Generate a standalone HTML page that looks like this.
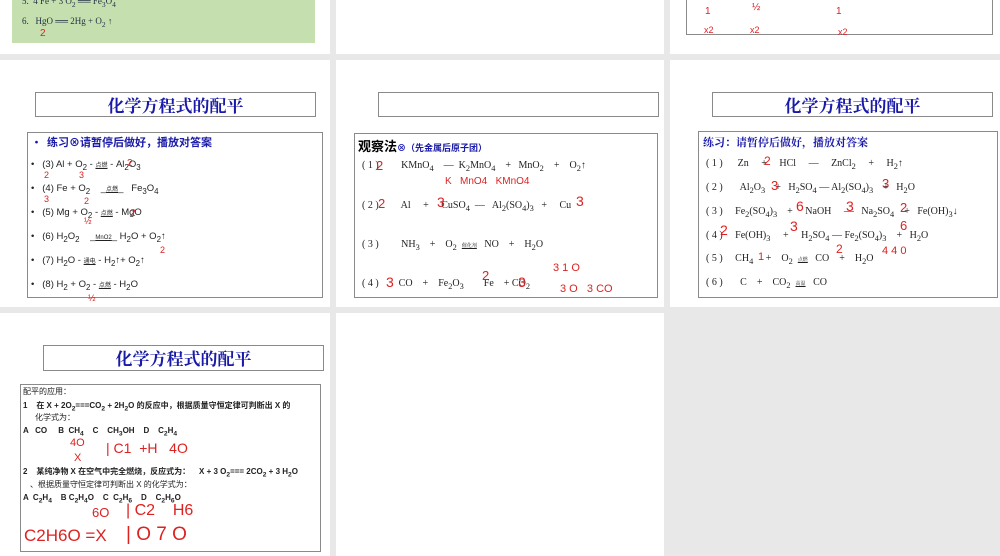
<!DOCTYPE html>
<html><head><meta charset="utf-8"><style>
*{margin:0;padding:0;box-sizing:border-box}
body{width:1000px;height:556px;background:#e8e8e8;position:relative;overflow:hidden;font-family:"Liberation Serif","Noto Serif CJK SC",serif;}
.s{position:absolute;background:#fff}
.a{position:absolute;white-space:nowrap}
.box{position:absolute;border:1px solid #8a8a8a;background:#fff}
.t{color:#1a1aa8;font-family:"Noto Serif CJK SC","Noto Sans CJK SC",serif;font-weight:bold;font-size:17px;text-align:center;line-height:24px}
.r{color:#d22;font-family:"Liberation Sans",sans-serif;position:absolute;white-space:nowrap}
.sm{font-size:9.5px;color:#222;font-family:"Liberation Sans","Noto Sans CJK SC",sans-serif}
.eq{font-size:10px;color:#222}
.b{color:#1a1aa8;font-weight:bold;font-family:"Noto Sans CJK SC",sans-serif}
</style></head><body>
<!-- row1 -->
<div class="s" style="left:0;top:0;width:330px;height:54px"></div>
<div class="a" style="left:12px;top:0;width:303px;height:43px;background:#c6dfae"></div>
<div class="a" style="left:22px;top:-4px;font-size:9px;color:#234">5.&nbsp; 4 Fe + 3 O<sub>2</sub> ══ Fe<sub>3</sub>O<sub>4</sub></div>
<div class="a" style="left:22px;top:16px;font-size:9px;color:#234">6.&nbsp;&nbsp; HgO ══ 2Hg + O<sub>2</sub> ↑</div>
<div class="r" style="left:40px;top:28px;font-size:10px">2</div>
<div class="s" style="left:336px;top:0;width:328px;height:54px"></div>
<div class="s" style="left:670px;top:0;width:330px;height:54px"></div>
<div class="box" style="left:686px;top:-2px;width:307px;height:37px"></div>
<div class="r" style="left:705px;top:6px;font-size:10px">1</div>
<div class="r" style="left:752px;top:2px;font-size:10px">½</div>
<div class="r" style="left:836px;top:6px;font-size:10px">1</div>
<div class="r" style="left:704px;top:25px;font-size:9px">x2</div>
<div class="r" style="left:750px;top:25px;font-size:9px">x2</div>
<div class="r" style="left:838px;top:27px;font-size:9px">x2</div>
<!-- row2 -->
<div class="s" style="left:0;top:60px;width:330px;height:247px"></div>
<div class="s" style="left:336px;top:60px;width:328px;height:247px"></div>
<div class="s" style="left:670px;top:60px;width:330px;height:247px"></div>
<div class="box t" style="left:35px;top:92px;width:281px;height:25px">化学方程式的配平</div>
<div class="box" style="left:378px;top:92px;width:281px;height:25px"></div>
<div class="box t" style="left:712px;top:92px;width:281px;height:25px">化学方程式的配平</div>

<div class="box" style="left:27px;top:132px;width:296px;height:166px"></div>
<div class="a b" style="left:31px;top:134px;font-size:11px">•&nbsp; 练习⊗请暂停后做好，播放对答案</div>
<div class="a sm" style="left:31px;top:159px">•&nbsp;&nbsp; (3) Al + O<sub>2</sub> - <u style="font-size:6px">点燃</u> - Al<sub>2</sub>O<sub>3</sub></div>
<div class="a sm" style="left:31px;top:183px">•&nbsp;&nbsp; (4) Fe + O<sub>2</sub> &nbsp;&nbsp; _<u style="font-size:6px">点燃</u>_ &nbsp; Fe<sub>3</sub>O<sub>4</sub></div>
<div class="a sm" style="left:31px;top:207px">•&nbsp;&nbsp; (5) Mg + O<sub>2</sub> - <u style="font-size:6px">点燃</u> - MgO</div>
<div class="a sm" style="left:31px;top:231px">•&nbsp;&nbsp; (6) H<sub>2</sub>O<sub>2</sub> &nbsp;&nbsp; _<u style="font-size:6px">MnO2</u>_ H<sub>2</sub>O + O<sub>2</sub>↑</div>
<div class="a sm" style="left:31px;top:255px">•&nbsp;&nbsp; (7) H<sub>2</sub>O - <u style="font-size:6px">通电</u> - H<sub>2</sub>↑+ O<sub>2</sub>↑</div>
<div class="a sm" style="left:31px;top:279px">•&nbsp;&nbsp; (8) H<sub>2</sub> + O<sub>2</sub> - <u style="font-size:6px">点燃</u> - H<sub>2</sub>O</div>
<div class="r" style="left:44px;top:170px;font-size:9px">2</div><div class="r" style="left:79px;top:170px;font-size:9px">3</div><div class="r" style="left:127px;top:158px;font-size:10px">2</div>
<div class="r" style="left:44px;top:194px;font-size:9px">3</div><div class="r" style="left:84px;top:196px;font-size:9px">2</div>
<div class="r" style="left:84px;top:216px;font-size:9px">½</div><div class="r" style="left:130px;top:208px;font-size:10px">2</div>
<div class="r" style="left:160px;top:245px;font-size:9px">2</div><div class="r" style="left:88px;top:293px;font-size:9px">½</div>

<div class="box" style="left:354px;top:133px;width:304px;height:165px"></div>
<div class="a" style="left:358px;top:136px;font-size:13px;font-weight:bold;font-family:'Noto Sans CJK SC',sans-serif">观察法<span class="b" style="font-size:9px">⊗（先金属后原子团）</span></div>
<div class="a eq" style="left:362px;top:160px">( 1 ) &nbsp;&nbsp;&nbsp;&nbsp;&nbsp;&nbsp;&nbsp; KMnO<sub>4</sub> &nbsp;&nbsp; — &nbsp;K<sub>2</sub>MnO<sub>4</sub> &nbsp;&nbsp; + &nbsp; MnO<sub>2</sub> &nbsp;&nbsp; + &nbsp;&nbsp; O<sub>2</sub>↑</div>
<div class="a eq" style="left:362px;top:200px">( 2 ) &nbsp;&nbsp;&nbsp;&nbsp;&nbsp;&nbsp;&nbsp; Al &nbsp;&nbsp;&nbsp; + &nbsp;&nbsp;&nbsp; CuSO<sub>4</sub> &nbsp;— &nbsp; Al<sub>2</sub>(SO<sub>4</sub>)<sub>3</sub> &nbsp;&nbsp;+ &nbsp;&nbsp;&nbsp; Cu</div>
<div class="a eq" style="left:362px;top:239px">( 3 ) &nbsp;&nbsp;&nbsp;&nbsp;&nbsp;&nbsp;&nbsp; NH<sub>3</sub> &nbsp;&nbsp; + &nbsp;&nbsp; O<sub>2</sub> &nbsp;<u style="font-size:5px">催化剂</u>&nbsp;&nbsp; NO &nbsp;&nbsp; + &nbsp;&nbsp; H<sub>2</sub>O</div>
<div class="a eq" style="left:362px;top:278px">( 4 ) &nbsp;&nbsp;&nbsp;&nbsp;&nbsp;&nbsp; CO &nbsp;&nbsp; + &nbsp;&nbsp; Fe<sub>2</sub>O<sub>3</sub> &nbsp;&nbsp;&nbsp;&nbsp;&nbsp;&nbsp; Fe &nbsp;&nbsp; + CO<sub>2</sub></div>
<div class="r" style="left:376px;top:158px;font-size:13px">2</div>
<div class="r" style="left:445px;top:176px;font-size:10px">K &nbsp;&nbsp;MnO4 &nbsp; KMnO4</div>
<div class="r" style="left:378px;top:196px;font-size:13px">2</div><div class="r" style="left:437px;top:194px;font-size:14px">3</div><div class="r" style="left:576px;top:193px;font-size:14px">3</div>
<div class="r" style="left:386px;top:274px;font-size:14px">3</div><div class="r" style="left:482px;top:268px;font-size:13px">2</div><div class="r" style="left:518px;top:274px;font-size:14px">3</div>
<div class="r" style="left:553px;top:262px;font-size:11px">3 1 O</div><div class="r" style="left:560px;top:283px;font-size:11px">3 O &nbsp; 3 CO</div>

<div class="box" style="left:698px;top:131px;width:300px;height:167px"></div>
<div class="a b" style="left:703px;top:134px;font-size:11px;font-family:'Noto Serif CJK SC',serif">练习：请暂停后做好，播放对答案</div>
<div class="a eq" style="left:706px;top:158px">( 1 ) &nbsp;&nbsp;&nbsp;&nbsp; Zn &nbsp;&nbsp;&nbsp; + &nbsp;&nbsp;&nbsp; HCl &nbsp;&nbsp;&nbsp; — &nbsp;&nbsp;&nbsp; ZnCl<sub>2</sub> &nbsp;&nbsp;&nbsp; + &nbsp;&nbsp;&nbsp; H<sub>2</sub>↑</div>
<div class="a eq" style="left:706px;top:182px">( 2 ) &nbsp;&nbsp;&nbsp;&nbsp;&nbsp; Al<sub>2</sub>O<sub>3</sub> &nbsp;&nbsp; + &nbsp; H<sub>2</sub>SO<sub>4</sub> — Al<sub>2</sub>(SO<sub>4</sub>)<sub>3</sub> &nbsp;&nbsp; + &nbsp; H<sub>2</sub>O</div>
<div class="a eq" style="left:706px;top:206px">( 3 ) &nbsp;&nbsp;&nbsp; Fe<sub>2</sub>(SO<sub>4</sub>)<sub>3</sub> &nbsp;&nbsp; + &nbsp;&nbsp;&nbsp; NaOH &nbsp;&nbsp;&nbsp; — &nbsp; Na<sub>2</sub>SO<sub>4</sub> &nbsp;&nbsp; + &nbsp; Fe(OH)<sub>3</sub>↓</div>
<div class="a eq" style="left:706px;top:230px">( 4 ) &nbsp;&nbsp;&nbsp; Fe(OH)<sub>3</sub> &nbsp;&nbsp;&nbsp; + &nbsp;&nbsp;&nbsp; H<sub>2</sub>SO<sub>4</sub> — Fe<sub>2</sub>(SO<sub>4</sub>)<sub>3</sub> &nbsp;&nbsp; + &nbsp; H<sub>2</sub>O</div>
<div class="a eq" style="left:706px;top:253px">( 5 ) &nbsp;&nbsp;&nbsp; CH<sub>4</sub> &nbsp;&nbsp;&nbsp; + &nbsp;&nbsp; O<sub>2</sub> &nbsp;<u style="font-size:5px">点燃</u>&nbsp;&nbsp; CO &nbsp;&nbsp; + &nbsp;&nbsp; H<sub>2</sub>O</div>
<div class="a eq" style="left:706px;top:277px">( 6 ) &nbsp;&nbsp;&nbsp;&nbsp;&nbsp; C &nbsp;&nbsp; + &nbsp;&nbsp; CO<sub>2</sub> &nbsp;<u style="font-size:5px">高温</u>&nbsp;&nbsp; CO</div>
<div class="r" style="left:764px;top:154px;font-size:12px">2</div><div class="r" style="left:771px;top:178px;font-size:13px">3</div><div class="r" style="left:882px;top:176px;font-size:13px">3</div>
<div class="r" style="left:796px;top:198px;font-size:14px">6</div><div class="r" style="left:846px;top:198px;font-size:14px">3</div><div class="r" style="left:900px;top:200px;font-size:13px">2</div>
<div class="r" style="left:720px;top:222px;font-size:14px">2</div><div class="r" style="left:790px;top:218px;font-size:14px">3</div><div class="r" style="left:900px;top:218px;font-size:13px">6</div>
<div class="r" style="left:758px;top:251px;font-size:11px">1</div><div class="r" style="left:836px;top:242px;font-size:12px">2</div><div class="r" style="left:882px;top:245px;font-size:11px">4 4 0</div>

<!-- row3 -->
<div class="s" style="left:0;top:313px;width:330px;height:243px"></div>
<div class="s" style="left:336px;top:313px;width:328px;height:243px"></div>
<div class="box t" style="left:43px;top:345px;width:281px;height:26px">化学方程式的配平</div>
<div class="box" style="left:20px;top:384px;width:301px;height:168px"></div>
<div class="a sm" style="left:23px;top:386px;font-size:8px">配平的应用：</div>
<div class="a sm" style="left:23px;top:400px;font-size:8px;font-weight:bold">1 &nbsp;&nbsp; 在 X + 2O<sub>2</sub>===CO<sub>2</sub> + 2H<sub>2</sub>O 的反应中，根据质量守恒定律可判断出 X 的</div>
<div class="a sm" style="left:35px;top:412px;font-size:8px">化学式为：</div>
<div class="a sm" style="left:23px;top:426px;font-size:8px;font-weight:bold">A &nbsp; CO &nbsp;&nbsp;&nbsp; B &nbsp;CH<sub>4</sub> &nbsp;&nbsp; C &nbsp;&nbsp; CH<sub>3</sub>OH &nbsp;&nbsp; D &nbsp;&nbsp; C<sub>2</sub>H<sub>4</sub></div>
<div class="r" style="left:70px;top:437px;font-size:11px">4O</div><div class="r" style="left:74px;top:452px;font-size:11px">X</div>
<div class="r" style="left:106px;top:440px;font-size:14px">| C1 &nbsp;+H &nbsp; 4O</div>
<div class="a sm" style="left:23px;top:466px;font-size:8px;font-weight:bold">2 &nbsp;&nbsp; 某纯净物 X 在空气中完全燃烧，反应式为： &nbsp;&nbsp; X + 3 O<sub>2</sub>=== 2CO<sub>2</sub> + 3 H<sub>2</sub>O</div>
<div class="a sm" style="left:30px;top:479px;font-size:8px">、根据质量守恒定律可判断出 X 的化学式为：</div>
<div class="a sm" style="left:23px;top:493px;font-size:8px;font-weight:bold">A &nbsp;C<sub>2</sub>H<sub>4</sub> &nbsp;&nbsp; B C<sub>2</sub>H<sub>4</sub>O &nbsp;&nbsp; C &nbsp;C<sub>2</sub>H<sub>6</sub> &nbsp;&nbsp; D &nbsp;&nbsp; C<sub>2</sub>H<sub>6</sub>O</div>
<div class="r" style="left:92px;top:505px;font-size:13px">6O</div>
<div class="r" style="left:126px;top:502px;font-size:16px;font-weight:300">| C2 &nbsp;&nbsp; H6</div>
<div class="r" style="left:24px;top:526px;font-size:17px">C2H6O =X</div>
<div class="r" style="left:126px;top:524px;font-size:19px">| O 7 O</div>
</body></html>
